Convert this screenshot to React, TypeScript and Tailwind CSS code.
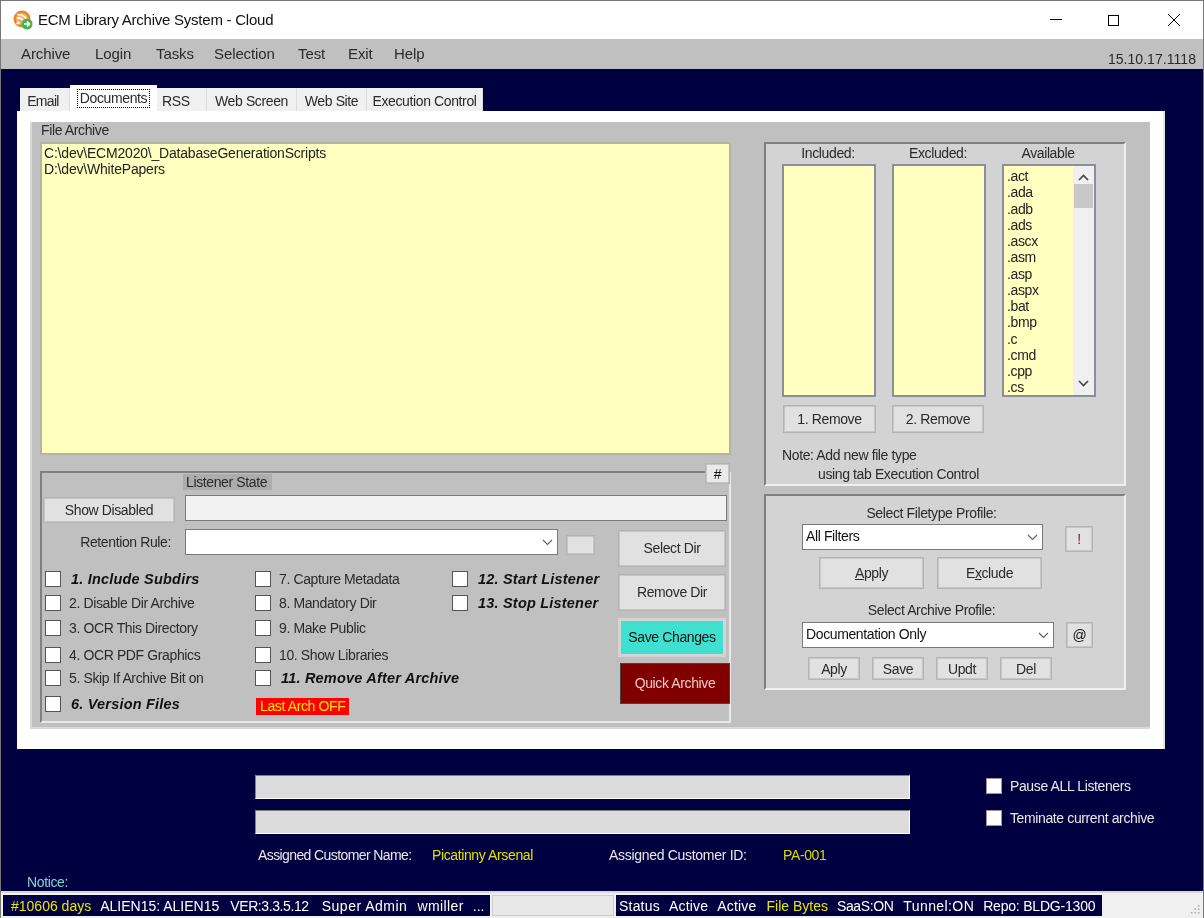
import React from "react";

const exts = [".act", ".ada", ".adb", ".ads", ".ascx", ".asm", ".asp", ".aspx", ".bat", ".bmp", ".c", ".cmd", ".cpp", ".cs"];
const tabs = [
  { name: "Web Screen", w: "w-[90px]" },
  { name: "Web Site", w: "w-[70px]" },
  { name: "Execution Control", w: "w-[116px]" },
];
const menus = [
  { name: "Archive", w: "w-[74px]" },
  { name: "Login", w: "w-[61px]" },
  { name: "Tasks", w: "w-[58px]" },
  { name: "Selection", w: "w-[84px]" },
  { name: "Test", w: "w-[50px]" },
  { name: "Exit", w: "w-[46px]" },
  { name: "Help", w: "w-[40px]" },
];

function Logo() {
  return (
    <svg width="20" height="20" viewBox="0 0 20 20" className="shrink-0">
      <circle cx="9" cy="9" r="8.5" fill="#e8862a" />
      <circle cx="9" cy="9" r="6" fill="#f4b26a" />
      <path d="M4 8a7 7 0 0 1 8 7M4 4.5a10 10 0 0 1 11 9" fill="none" stroke="#fff" strokeWidth="1.6" />
      <circle cx="5" cy="13" r="1.6" fill="#fff" />
      <circle cx="14" cy="14" r="5.5" fill="#4caf50" />
      <path d="M11 14h5M14 11.5l2.5 2.5-2.5 2.5" fill="none" stroke="#fff" strokeWidth="1.6" />
    </svg>
  );
}

function Chevron({ className = "", heavy }: { className?: string; heavy?: boolean }) {
  return (
    <svg width="11" height="7" viewBox="0 0 11 7" className={className}>
      <path d="M1 1l4.5 4.5L10 1" fill="none" stroke={heavy ? "#444" : "#606060"} strokeWidth={heavy ? 1.6 : 1.1} />
    </svg>
  );
}

function Check({ label, strong, dark }: { label?: string; strong?: boolean; dark?: boolean }) {
  return (
    <div className="flex items-center h-4">
      <span className={`w-4 h-4 shrink-0 bg-white border ${dark ? "border-[#999]" : "border-[#555]"}`} />
      {strong ? (
        <span className="ml-[10px] font-bold italic text-[14.5px] tracking-[0.2px] text-[#111] whitespace-nowrap">{label}</span>
      ) : (
        <span className="ml-2 whitespace-nowrap">{label}</span>
      )}
    </div>
  );
}

function Btn({ className = "", children }: { className?: string; children?: React.ReactNode }) {
  return (
    <div className={`flex items-center justify-center bg-[#e1e1e1] border-2 border-[#c6c6c6] outline outline-[#b4b4b4] -outline-offset-1 shrink-0 ${className}`}>
      {children}
    </div>
  );
}

function Select({ value, className = "" }: { value?: string; className?: string }) {
  return (
    <div className={`flex items-center justify-between h-[26px] bg-white border border-[#7a7a7a] pl-[3px] pr-[4px] pb-[2px] text-[#111] shrink-0 ${className}`}>
      <span>{value}</span>
      <Chevron className="mt-[2px]" />
    </div>
  );
}

function ListBox({ className = "" }: { className?: string }) {
  return <div className={`w-[94px] h-full bg-[#ffffc0] border-2 border-[#8a8f99] ${className}`} />;
}

function Bar() {
  return <div className="h-[24px] bg-[#dcdcdc] border border-t-[#808080] border-l-[#808080] border-r-white border-b-white" />;
}

export default function App() {
  return (
    <div className="w-[1204px] h-[918px] overflow-hidden flex flex-col bg-[#000040] border-l border-r border-[#777] blur-[0.3px] font-['Liberation_Sans',Arial,sans-serif] text-[14px] tracking-[-0.38px] leading-4 text-[#2a2a2a]">
      <div className="h-[39px] shrink-0 bg-white border-t border-[#777] flex items-center pl-3">
        <Logo />
        <span className="ml-[5px] text-[15px] text-[#111] tracking-[-0.24px]">ECM Library Archive System - Cloud</span>
        <div className="ml-auto flex items-center text-black">
          <svg width="14" height="14" viewBox="0 0 14 14" className="mr-[44px]"><path d="M1 6.5h12" stroke="#000" /></svg>
          <svg width="13" height="13" viewBox="0 0 13 13" className="mr-[47px]"><rect x="1.5" y="1.5" width="10" height="10" fill="none" stroke="#000" /></svg>
          <svg width="14" height="14" viewBox="0 0 14 14" className="mr-[22px]"><path d="M1 1l12 12M13 1L1 13" stroke="#000" /></svg>
        </div>
      </div>

      <div className="h-[30px] shrink-0 bg-[#c0c0c0] flex items-center pl-[20px] pr-[7px] text-[15px] tracking-[-0.1px]">
        <div className="flex -mt-[1px]">
          {menus.map((m) => (
            <span key={m.name} className={m.w}>{m.name}</span>
          ))}
        </div>
        <span className="ml-auto mt-[10px] text-[14px] tracking-[0.05px]">15.10.17.1118</span>
      </div>

      <div className="flex-1 flex flex-col pl-4">
        <div className="flex items-end h-[43px] pl-[3px]">
          <div className="w-[50px] h-[24px] bg-[#f0f0f0] flex items-center justify-center pt-[2px] pr-[3px] border-r border-[#ddd] tracking-[-0.7px]">Email</div>
          <div className="w-[87px] h-[27px] bg-white flex items-center justify-center">
            <span className="border border-dotted border-black px-[2px] leading-[17px]">Documents</span>
          </div>
          <div className="w-[50px] h-[24px] bg-[#f0f0f0] flex items-center pt-[2px] pl-[5px] border-r border-[#ddd]">RSS</div>
          {tabs.map((t) => (
            <div key={t.name} className={`${t.w} h-[24px] bg-[#f0f0f0] flex items-center justify-center pt-[2px] border-r border-[#ddd] whitespace-nowrap`}>
              {t.name}
            </div>
          ))}
        </div>

        <div className="w-[1148px] h-[638px] bg-white -mt-[1px] pt-[11px] pl-[13px] border-r-2 border-[#e4e4e4]">
          <div className="w-[1120px] h-[607px] bg-[#c0c0c0] border-b-2 border-l-2 border-[#d8d8d8] pl-[8px]">
            <div className="flex gap-[33px] pt-[20px]">
              <div className="w-[691px] shrink-0">
                <div className="relative h-0">
                  <span className="absolute left-[1px] -top-[20px]">File Archive</span>
                </div>
                <div className="h-[313px] bg-[#ffffc0] border-2 border-[#b4b4a8] pl-[2px] pt-[1px] tracking-[-0.2px] text-[#222]">
                  <div>C:\dev\ECM2020\_DatabaseGenerationScripts</div>
                  <div>D:\dev\WhitePapers</div>
                </div>

                <div className="relative mt-[16px] h-[252px] border-2 border-t-[#808080] border-l-[#808080] border-r-[#e8e8e8] border-b-[#e8e8e8] pl-[1px]">
                  <Btn className="absolute -right-[1px] -top-[10px] w-[25px] h-[21px] bg-[#eaeaea] text-[#111]">#</Btn>
                  <div className="ml-[140px] mt-[1px] w-[89px] h-[16px] bg-[#acacac] pl-[3px] leading-[16px] whitespace-nowrap">Listener State</div>
                  <div className="flex items-start mt-[7px]">
                    <Btn className="w-[132px] h-[26px]">Show Disabled</Btn>
                    <div className="ml-[10px] w-[542px] h-[26px] bg-[#f2f2f2] border border-[#7a7a7a] -mt-[2px]" />
                  </div>
                  <div className="flex">
                    <div className="w-[575px] shrink-0">
                      <div className="flex items-center mt-[6px]">
                        <span className="w-[128px] text-right whitespace-nowrap">Retention Rule:</span>
                        <Select className="ml-[14px] w-[373px]" />
                        <Btn className="ml-[8px] mt-[6px] w-[29px] h-[20px]" />
                      </div>
                      <div className="grid grid-cols-[210px_197px_1fr] grid-rows-[24px_25px_27px_23px_26px_24px] mt-[16px] pl-[2px]">
                        <Check label="1. Include Subdirs" strong />
                        <Check label="7. Capture Metadata" />
                        <Check label="12. Start Listener" strong />
                        <Check label="2. Disable Dir Archive" />
                        <Check label="8. Mandatory Dir" />
                        <Check label="13. Stop Listener" strong />
                        <Check label="3. OCR This Directory" />
                        <Check label="9. Make Public" />
                        <div />
                        <Check label="4. OCR PDF Graphics" />
                        <Check label="10. Show Libraries" />
                        <div />
                        <Check label="5. Skip If Archive Bit on" />
                        <Check label="11. Remove After Archive" strong />
                        <div />
                        <Check label="6. Version Files" strong />
                        <div className="flex items-center h-4 mt-[2px]">
                          <span className="ml-[1px] bg-[#ff0000] text-[#ffe600] px-[4px] leading-[17px]">Last Arch OFF</span>
                        </div>
                        <div />
                      </div>
                    </div>
                    <div className="flex flex-col pt-[7px]">
                      <Btn className="w-[108px] h-[37px] pb-[1px]">Select Dir</Btn>
                      <Btn className="w-[108px] h-[37px] mt-[7px] pb-[1px]">Remove Dir</Btn>
                      <div className="w-[108px] h-[39px] mt-[7px] pb-[1px] bg-[#40e0d0] border-[3px] border-[#d4d4d4] flex items-center justify-center text-[#111]">Save Changes</div>
                      <div className="w-[110px] h-[41px] mt-[6px] ml-[2px] pb-[1px] bg-[#800000] border border-[#444] flex items-center justify-center text-[#f0c8c8]">Quick Archive</div>
                    </div>
                  </div>
                </div>
              </div>

              <div className="w-[362px] shrink-0">
                <div className="h-[344px] bg-[#d3d3d3] border-2 border-t-[#808080] border-l-[#808080] border-r-[#f0f0f0] border-b-[#f0f0f0] pl-[16px]">
                  <div className="flex h-[20px] items-center pb-[3px] text-center">
                    <span className="w-[92px]">Included:</span>
                    <span className="w-[92px] ml-[18px]">Excluded:</span>
                    <span className="w-[92px] ml-[18px]">Available</span>
                  </div>
                  <div className="flex h-[233px]">
                    <ListBox />
                    <ListBox className="ml-[16px]" />
                    <div className="ml-[16px] w-[94px] h-full border-2 border-[#8a8f99] bg-[#f0f0f0] flex">
                      <div className="w-[69px] h-full bg-[#ffffc0] pl-[3px] pt-[2px] leading-[16.25px] overflow-hidden text-[#222]">
                        {exts.map((e) => (
                          <div key={e}>{e}</div>
                        ))}
                      </div>
                      <div className="flex-1 flex flex-col items-center">
                        <Chevron heavy className="rotate-180 mt-[8px]" />
                        <div className="w-[19px] h-[24px] bg-[#c8c8c8] mt-[3px]" />
                        <Chevron heavy className="mt-auto mb-[8px]" />
                      </div>
                    </div>
                  </div>
                  <div className="flex mt-[8px] ml-[1px] gap-[16px]">
                    <Btn className="w-[93px] h-[28px]">1. Remove</Btn>
                    <Btn className="w-[92px] h-[28px]">2. Remove</Btn>
                  </div>
                  <div className="mt-[13px] whitespace-nowrap leading-[19px]">
                    <div>Note: Add new file type</div>
                    <div className="pl-[36px]">using tab Execution Control</div>
                  </div>
                </div>

                <div className="mt-[8px] h-[196px] bg-[#d3d3d3] border-2 border-t-[#808080] border-l-[#808080] border-r-[#f0f0f0] border-b-[#f0f0f0] pl-[36px]">
                  <div className="ml-[9px] w-[241px] text-center h-[28px] pt-[9px]">Select Filetype Profile:</div>
                  <div className="flex items-start">
                    <Select value="All Filters" className="w-[241px]" />
                    <Btn className="ml-[22px] mt-[2px] w-[28px] h-[26px] text-[#7a1040]">!</Btn>
                  </div>
                  <div className="flex mt-[5px] ml-[17px] gap-[13px]">
                    <Btn className="w-[105px] h-[32px]"><span><u>A</u>pply</span></Btn>
                    <Btn className="w-[105px] h-[32px]"><span>E<u>x</u>clude</span></Btn>
                  </div>
                  <div className="ml-[9px] w-[241px] text-center mt-[13px] h-[20px]">Select Archive Profile:</div>
                  <div className="flex">
                    <Select value="Documentation Only" className="w-[252px]" />
                    <Btn className="ml-[12px] w-[27px] h-[26px] text-[#111]">@</Btn>
                  </div>
                  <div className="flex mt-[9px] ml-[6px] gap-[12px]">
                    {["Aply", "Save", "Updt", "Del"].map((b) => (
                      <Btn key={b} className="w-[52px] h-[23px]">{b}</Btn>
                    ))}
                  </div>
                </div>
              </div>
            </div>
          </div>
        </div>

        <div className="flex pl-[238px] pt-[26px] text-[#e8e8e8]">
          <div className="w-[655px] flex flex-col gap-[11px]">
            <Bar />
            <Bar />
          </div>
          <div className="ml-[76px] flex flex-col gap-[16px] pt-[3px]">
            <Check label="Pause ALL Listeners" dark />
            <Check label="Teminate current archive" dark />
          </div>
        </div>

        <div className="flex pl-[241px] mt-[13px] text-[#e8e8e8] whitespace-nowrap">
          <span className="w-[174px] tracking-[-0.6px]">Assigned Customer Name:</span>
          <span className="w-[177px] text-[#e0e000]">Picatinny Arsenal</span>
          <span className="w-[174px] tracking-[-0.3px]">Assigned Customer ID:</span>
          <span className="text-[#d8d800]">PA-001</span>
        </div>
        <div className="pl-[10px] mt-[12px] text-[#7fd8d0] leading-[14px]">Notice:</div>
      </div>

      <div className="h-[27px] shrink-0 bg-[#f0f0f0] border-t-2 border-[#d8d8d8] flex items-center pl-[2px] whitespace-nowrap text-white tracking-normal">
        <div className="w-[487px] h-[21px] bg-[#000040] flex items-center pl-[8px]">
          <span className="text-[#e6e600]">#10606 days</span>
          <span className="ml-[9px]">ALIEN15: ALIEN15</span>
          <span className="ml-[11px] tracking-[-0.4px]">VER:3.3.5.12</span>
          <span className="ml-[13px] tracking-[0.5px]">Super Admin</span>
          <span className="ml-[10px] tracking-[0.4px]">wmiller</span>
          <span className="ml-[9px]">...</span>
        </div>
        <div className="ml-[2px] w-[122px] h-[21px] bg-[#e8e8e8] border border-[#ccc]" />
        <div className="ml-[2px] w-[486px] h-[21px] bg-[#000040] flex items-center pl-[3px] gap-[9px]">
          <span className="tracking-[0.2px]">Status</span>
          <span className="tracking-[0.2px]">Active</span>
          <span className="tracking-[0.2px]">Active</span>
          <span className="ml-[1px] text-[#e6e600]">File Bytes</span>
          <span className="tracking-[-0.4px]">SaaS:ON</span>
          <span className="ml-[1px] tracking-[0.4px]">Tunnel:ON</span>
          <span className="tracking-[-0.2px]">Repo: BLDG-1300</span>
        </div>
        <svg width="10" height="10" viewBox="0 0 10 10" className="ml-auto mr-[3px] mt-[6px]">
          <path d="M8 1h1.5v1.5H8zM4.5 4.5H6V6H4.5zM8 4.5h1.5V6H8zM1 8h1.5v1.5H1zM4.5 8H6v1.5H4.5zM8 8h1.5v1.5H8z" fill="#a8a8a8" />
        </svg>
      </div>
    </div>
  );
}
